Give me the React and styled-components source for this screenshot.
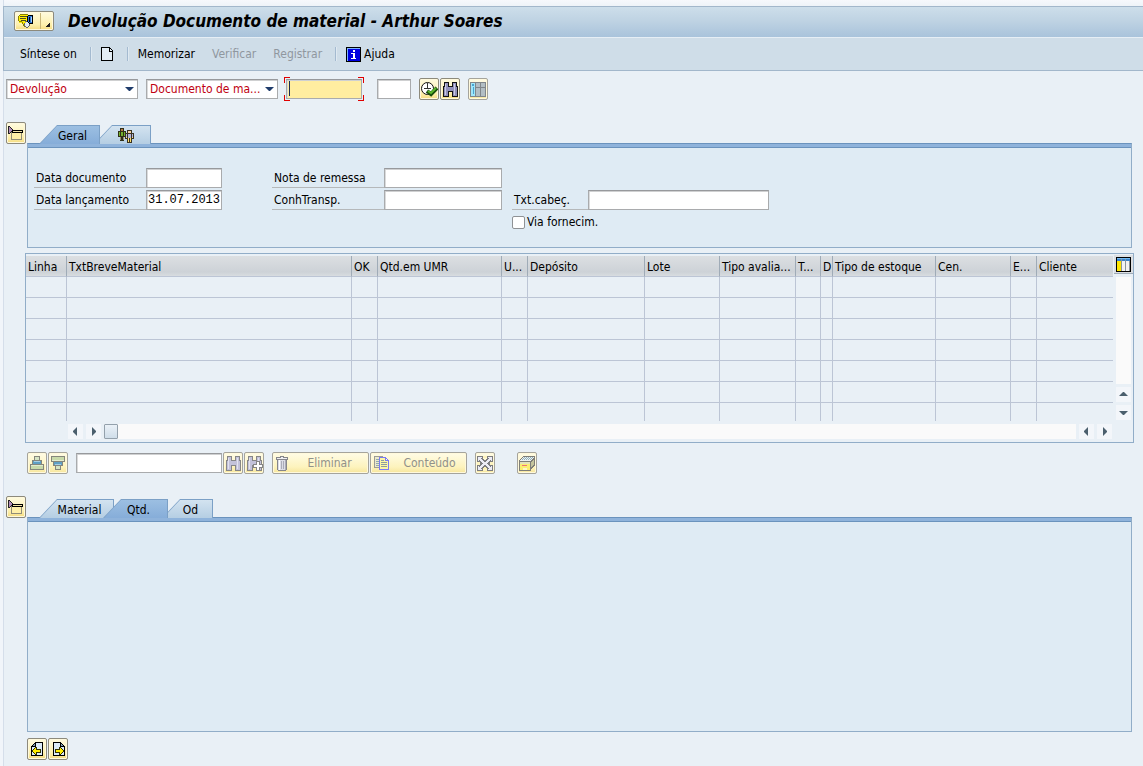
import React, { useState } from "react";
import styled, { createGlobalStyle, css } from "styled-components";

const GlobalStyle = createGlobalStyle`
  * {
    box-sizing: border-box;
  }
  body {
    margin: 0;
    background: #e9f0f6;
    color: #000;
    font-family: "DejaVu Sans Condensed", "DejaVu Sans", sans-serif;
    font-size: 12px;
    line-height: 16px;
  }
  button,
  input,
  select {
    font: inherit;
    color: inherit;
    margin: 0;
  }
`;

const columns = [
  { name: "Linha", width: 41 },
  { name: "TxtBreveMaterial" },
  { name: "OK", width: 26 },
  { name: "Qtd.em UMR", width: 124 },
  { name: "U...", width: 26 },
  { name: "Depósito", width: 117 },
  { name: "Lote", width: 75 },
  { name: "Tipo avalia...", width: 76 },
  { name: "T...", width: 25 },
  { name: "D", width: 12 },
  { name: "Tipo de estoque", width: 103 },
  { name: "Cen.", width: 75 },
  { name: "E...", width: 26 },
  { name: "Cliente", width: 76 }
];

const emptyRows = [1, 2, 3, 4, 5, 6, 7];

/* icons */

const Icon = ({ w = 16, h = 16, children }) => (
  <svg
    width={w}
    height={h}
    viewBox={`0 0 ${w} ${h}`}
    shapeRendering='crispEdges'
    aria-hidden='true'
  >
    {children}
  </svg>
);

const MenuIcon = () => (
  <Icon w={17} h={15}>
    <path d='M1 1h9v8H7v3H6v-1H5v-1H4V9H1z' fill='#ffee00' />
    <path d='M2 0h8v1H2zM1 1h1v1H1zM0 2h1v5H0zM1 7h3v1H1zM4 8h1v2H4zM5 10h1v2H5zM6 12h1v1H6z' fill='#8a8200' />
    <path d='M2 2h7v1H2zM2 4h6v1H2zM3 6h5v1H3z' fill='#4a4a20' />
    <path d='M9 2h1V1h6v9h-5V9h-1V8H9z' fill='#000' />
    <path d='M10 2h5v7h-4V8h-1z' fill='#2f78d8' />
    <path d='M11 3h1v5h-1zM12 4h1v3h-1z' fill='#000' />
    <path d='M14 3h1v5h-1z' fill='#a8d4ff' />
    <path d='M7 9h1V8h2v1h1v3h-1v1H8v-1H7z' fill='#e4ecf2' />
    <path d='M7 7h2v1H7zM6 9h1v3H6zM7 12h1v1H7zM8 13h2v1H8zM10 12h1v1h-1zM11 10h1v2h-1z' fill='#666' />
  </Icon>
);

const NewIcon = () => (
  <Icon w={13} h={14}>
    <path d='M1 1h7l4 4v8H1z' fill='#e3edf5' />
    <path d='M0 0h9v1H1v12h10V4h1v10H0zM8 1h1v3h3v1H8zM9 1h1v1H9zM10 2h1v1h-1zM11 3h1v1h-1z' fill='#000' />
  </Icon>
);

const InfoIcon = () => (
  <Icon w={15} h={15}>
    <path d='M0 0h15v15H0z' fill='#000' />
    <path d='M1 1h13v13H1z' fill='#0000e0' />
    <path d='M1 1h13v1H2v12H1z' fill='#7db4ff' />
    <path d='M7 3h2v2H7zM5 6h4v5h1v1H5v-1h2V7H5z' fill='#fff' />
  </Icon>
);

const ExecuteIcon = () => (
  <Icon w={18} h={16}>
    <circle cx='7.5' cy='7.5' r='6' fill='#fff' stroke='#111' shapeRendering='auto' />
    <path d='M7 2h1v6H7zM4 7h7v1H4z' fill='#333' />
    <path d='M7 10l4 3 6-6' stroke='#174d0c' strokeWidth='4' fill='none' shapeRendering='auto' />
    <path d='M8 10l3 2 5-5' stroke='#5cb82e' strokeWidth='2' fill='none' shapeRendering='auto' />
  </Icon>
);

const FindIcon = ({ more, off }) => (
  <Icon w={17} h={15}>
    <path
      d='M2 0h5v4h3V0h5v4h1v11h-6v-5H7v5H1V4h1z'
      fill={off ? "#868686" : "#111"}
    />
    <path
      d='M3 1h3v4h5V1h3v4h1v9h-4V9H6v5H2V5h1z'
      fill={off ? "#c3c2da" : "#9190bb"}
    />
    <path d='M3 2h1v11H3zM12 2h1v11h-1z' fill={off ? "#e2e2ef" : "#c9c9e4"} />
    {more && (
      <g>
        <path d='M10 5h4v3h3v4h-3v3h-4v-3H7V8h3z' fill='#868686' />
        <path d='M11 6h2v3h3v2h-3v3h-2v-3H8V9h3z' fill='#fff' />
      </g>
    )}
  </Icon>
);

const LayoutIcon = () => (
  <Icon w={16} h={15}>
    <path d='M0 0h16v15H0z' fill='#80868a' />
    <path d='M1 1h4v13H1z' fill='#9fe6fa' />
    <path d='M2 2h2v2H2zM3 5h1v7H3z' fill='#4aa5d0' />
    <path d='M6 1h4v4H6zM11 1h4v4h-4zM6 6h4v8H6zM11 6h4v8h-4z' fill='#b2bec4' />
  </Icon>
);

const TrayIcon = () => (
  <Icon w={16} h={15}>
    <path d='M4 7h9v6H4z' fill='#fff0a8' />
    <path d='M3 6h1v8H3zM3 13h11v1H3zM13 7h1v7h-1z' fill='#918d78' />
    <path d='M4 4h11v3H4z' fill='#000' />
    <path d='M5 5h9v1H5z' fill='#f3e5ab' />
    <path d='M1 1h1v1h1v1h1v2H3v1H2v1H1z' fill='#b48fbd' />
    <path d='M0 0h1v8H0zM1 0h1v1H1zM2 1h1v1H2zM3 2h1v1H3zM4 3h1v1H4zM3 5h1v1H3zM2 6h1v1H2zM1 7h1v1H1z' fill='#222' />
  </Icon>
);

const PartnerIcon = () => (
  <Icon w={17} h={15}>
    <path d='M3 0h4v3h2v6H7v4H3V9H1V3h2z' fill='#303018' />
    <path d='M4 1h2v2H4z' fill='#b67645' />
    <path d='M2 4h1v4H2zM4 4h2v4H4zM7 4h1v4H7z' fill='#74b02e' />
    <path d='M3 9h1v3H3zM6 9h1v3H6z' fill='#9a8a70' />
    <path d='M10 2h5v3h2v6h-2v4h-5v-4H8V5h2z' fill='#3a3322' />
    <path d='M11 3h3v2h-3z' fill='#f6d2a4' />
    <path d='M9 6h1v3H9zM11 6h3v4h-3zM15 6h1v3h-1z' fill='#b3b5dc' />
    <path d='M9 9h1v1H9zM15 9h1v1h-1z' fill='#ffe08a' />
    <path d='M11 10h1v4h-1zM13 10h1v4h-1z' fill='#ffdf6a' />
  </Icon>
);

const ConfigIcon = () => (
  <Icon w={15} h={15}>
    <path d='M0 0h15v15H0z' fill='#000' />
    <path d='M1 1h13v3H1z' fill='#3584d0' />
    <path d='M1 1h13v1H1z' fill='#73b9ef' />
    <path d='M1 4h4v10H1z' fill='#ffe600' />
    <path d='M6 4h3v10H6zM10 4h4v10h-4z' fill='#f2f2f2' />
    <path d='M5 2h1v12H5zM9 2h1v12H9zM13 4h1v10h-1z' fill='#8a949b' />
  </Icon>
);

const SortIcon = ({ down }) => (
  <Icon w={14} h={14}>
    <g transform={down ? "translate(0 14) scale(1 -1)" : undefined}>
      <path d='M4 0h6v4h2v4h2v6H0V8h2V4h2z' fill='#85867c' />
      <path d='M5 1h4v3H5z' fill='#d6e4c4' />
      <path d='M3 5h8v3H3z' fill='#5f9fc4' />
      <path d='M4 5h6v1H4z' fill='#a5cfe6' />
      <path d='M1 9h12v4H1z' fill='#c8daaa' />
      <path d='M1 9h12v1H1z' fill='#e2edd0' />
    </g>
  </Icon>
);

const TrashIcon = () => (
  <Icon w={12} h={15}>
    <path d='M4 0h4v1h4v3h-1v10h-1v1H2v-1H1V4H0V1h4z' fill='#85858a' />
    <path d='M5 1h2v1H5zM1 2h10v1H1z' fill='#f0f0f3' />
    <path d='M2 4h8v10H2z' fill='#dcdde6' />
    <path d='M3 4h1v10H3z' fill='#fff' />
    <path d='M5 5h1v8H5zM7 5h1v8H7zM9 4h1v10H9z' fill='#aaabb8' />
  </Icon>
);

const CopyIcon = () => (
  <Icon w={16} h={15}>
    <path d='M0 0h9v12H0z' fill='#9b9b96' />
    <path d='M1 1h7v10H1z' fill='#eceacb' />
    <path d='M2 3h3v1H2zM2 5h3v1H2zM2 7h3v1H2zM2 9h3v1H2z' fill='#90a8b0' />
    <path d='M5 1h7v1h1v1h1v1h1v10H5z' fill='#7b7bf2' />
    <path d='M6 2h5v3h3v8H6z' fill='#fdf6a4' />
    <path d='M12 3h1v1h-1z' fill='#fff' />
    <path d='M7 4h3v1H7zM7 6h6v1H7zM7 8h6v1H7zM7 10h6v1H7z' fill='#8d9ca0' />
  </Icon>
);

const ExpandIcon = () => (
  <Icon w={16} h={15}>
    <g fill='#7d7d80'>
      <path d='M0 0h6v3h1v1h2V3h1V0h6v6h-3v3h3v6h-6v-3H9v-1H7v1H6v3H0V9h3V6H0z' />
    </g>
    <path
      d='M1 1h4v1H4v1h1v1h1v1h1v1h2V5h1V4h1V3h1V2h-1V1h4v4h-1V4h-1v1h-1v1h-1v1h-1v1h1v1h1v1h1v1h1v-1h1v4h-4v-1h1v-1h-1v-1h-1v-1H9V9H7v1H6v1H5v1H4v1h1v1H1v-4h1v1h1v-1h1V9h1V8h1V7H5V6H4V5H3V4H2v1H1z'
      fill='#ececf6'
    />
    <path d='M6 0h4v2H6zM6 13h4v2H6zM0 6h2v3H0zM14 6h2v3h-2z' fill='#fdf3bd' />
  </Icon>
);

const BoxIcon = () => (
  <Icon w={16} h={15}>
    <path d='M4 0h12v10h-1v1h-1v1h-1v1h-1v2H0V4h1V3h1V2h1V1h1z' fill='#7e7e78' />
    <path d='M4 1h11v1h-1v1h-1v1h-1v1H1V4h1V3h1V2h1z' fill='#eef2ee' />
    <path d='M5 1h1v1H5zM7 1h1v1H7zM9 1h1v1H9zM11 1h1v1h-1zM13 1h1v1h-1zM4 2h1v1H4zM6 2h1v1H6zM8 2h1v1H8zM10 2h1v1h-1zM12 2h1v1h-1zM3 3h1v1H3zM5 3h1v1H5zM7 3h1v1H7zM9 3h1v1H9zM11 3h1v1h-1z' fill='#8fb0c0' />
    <path d='M1 6h10v8H8v-2H4v2H1z' fill='#fbee70' />
    <path d='M4 12h4v2H4z' fill='#fff6c4' />
    <path d='M1 6h10v2H1z' fill='#e3e2bb' />
    <path d='M12 6h1V5h1V4h1v5h-1v1h-1v1h-1z' fill='#c4c49c' />
    <path d='M3 9h5v1H3z' fill='#f07575' />
  </Icon>
);

const PageIcon = ({ next }) => (
  <Icon w={13} h={14}>
    <g transform={next ? undefined : "translate(13 0) scale(-1 1)"}>
      <path d='M1 0h8v1h1v1h1v1h1v1h1v10H1z' fill='#000' />
      <path d='M2 1h6v4h4v8H2z' fill='#dcebf8' />
      <path d='M9 2h1v1h1v1H9z' fill='#7c9cae' />
      <path d='M3 7h4V5h2v1h1v1h1v1h1v2h-1v1h-1v1H9v1H7v-2H3z' fill='#333300' />
      <path d='M4 8h4V6h1v1h1v1h1v2h-1v1H9v1H8v-2H4z' fill='#ffee00' />
    </g>
  </Icon>
);

/* Small triangles of the drop-downs and the scroll bars */
const Arrow = ({ dir = "down", color = "#4b5f6d" }) => {
  const shapes = {
    down: "M0 3h9L5 7H4z",
    up: "M0 6h9L5 2H4z",
    left: "M6 0v9L2 5V4z",
    right: "M3 0v9l4-4V4z"
  };
  return (
    <svg width='9' height='9' viewBox='0 0 9 9' aria-hidden='true'>
      <path d={shapes[dir]} fill={color} />
    </svg>
  );
};

const Tabs = ({ tabs, active, onChange }) => (
  <TabList role='tablist'>
    {tabs.map((tab, i) => (
      <Tab
        key={tab.name}
        type='button'
        role='tab'
        aria-label={tab.name}
        aria-selected={active === i}
        $active={active === i}
        $width={tab.width}
        onClick={() => onChange(i)}
      >
        {tab.icon || tab.name}
      </Tab>
    ))}
  </TabList>
);

const App = () => {
  const [headerTab, setHeaderTab] = useState(0);
  const [itemTab, setItemTab] = useState(1);

  return (
    <Window>
      <GlobalStyle />
      <Header>
        <TitleBar>
          <MenuButton type='button' aria-label='Menu'>
            <MenuIcon />
            <span className='corner' />
          </MenuButton>
          <h1>Devolução Documento de material - Arthur Soares</h1>
        </TitleBar>
        <Toolbar>
          <ToolButton type='button'>Síntese on</ToolButton>
          <Divider />
          <ToolButton type='button' aria-label='Novo'>
            <NewIcon />
          </ToolButton>
          <Divider />
          <ToolButton type='button'>Memorizar</ToolButton>
          <ToolButton type='button' disabled>
            Verificar
          </ToolButton>
          <ToolButton type='button' disabled>
            Registrar
          </ToolButton>
          <Divider />
          <ToolButton type='button'>
            <InfoIcon />
            Ajuda
          </ToolButton>
        </Toolbar>
      </Header>

      <ActionRow>
        <SelectBox>
          <select aria-label='Operação' defaultValue='Devolução'>
            <option>Devolução</option>
          </select>
          <Arrow color='#1f3c6b' />
        </SelectBox>
        <SelectBox>
          <select aria-label='Referência' defaultValue='Documento de ma...'>
            <option>Documento de ma...</option>
          </select>
          <Arrow color='#1f3c6b' />
        </SelectBox>
        <FocusFrame>
          <Field $width={76} $focus aria-label='Número do documento' />
        </FocusFrame>
        <Field $width={34} aria-label='Exercício' />
        <ButtonGroup>
          <IconButton type='button' aria-label='Executar'>
            <ExecuteIcon />
          </IconButton>
          <IconButton type='button' aria-label='Procurar'>
            <FindIcon />
          </IconButton>
        </ButtonGroup>
        <IconButton type='button' disabled aria-label='Layout'>
          <LayoutIcon />
        </IconButton>
      </ActionRow>

      <Tray>
        <IconButton type='button' aria-label='Fechar cabeçalho'>
          <TrayIcon />
        </IconButton>
        <div>
          <Tabs
            active={headerTab}
            onChange={setHeaderTab}
            tabs={[
              { name: "Geral", width: 61 },
              { name: "Parceiro", width: 57, icon: <PartnerIcon /> }
            ]}
          />
          <Panel $height={105}>
            <Form>
              <FormColumn>
                <FormRow $label={112}>
                  <label htmlFor='data-doc'>Data documento</label>
                  <Field id='data-doc' $width={76} />
                </FormRow>
                <FormRow $label={112}>
                  <label htmlFor='data-lanc'>Data lançamento</label>
                  <Field id='data-lanc' $width={76} defaultValue='31.07.2013' />
                </FormRow>
              </FormColumn>
              <FormColumn>
                <FormRow $label={112}>
                  <label htmlFor='nota'>Nota de remessa</label>
                  <Field id='nota' $width={118} />
                </FormRow>
                <FormRow $label={112}>
                  <label htmlFor='conh'>ConhTransp.</label>
                  <Field id='conh' $width={118} />
                </FormRow>
              </FormColumn>
              <FormColumn $end>
                <FormRow $label={76}>
                  <label htmlFor='cabec'>Txt.cabeç.</label>
                  <Field id='cabec' $width={181} />
                </FormRow>
                <CheckLabel>
                  <input type='checkbox' />
                  Via fornecim.
                </CheckLabel>
              </FormColumn>
            </Form>
          </Panel>
        </div>
      </Tray>

      <Grid>
        <div className='main'>
          <Table>
            <colgroup>
              {columns.map(col => (
                <col key={col.name} width={col.width} />
              ))}
            </colgroup>
            <thead>
              <tr>
                {columns.map(col => (
                  <th key={col.name}>{col.name}</th>
                ))}
              </tr>
            </thead>
            <tbody>
              {emptyRows.map(row => (
                <tr key={row}>
                  {columns.map(col => (
                    <td key={col.name} />
                  ))}
                </tr>
              ))}
            </tbody>
          </Table>
          <HScroll>
            <ScrollButton type='button' aria-label='Primeira coluna'>
              <Arrow dir='left' />
            </ScrollButton>
            <ScrollButton type='button' aria-label='Próxima coluna'>
              <Arrow dir='right' />
            </ScrollButton>
            <div className='track'>
              <div className='thumb' />
            </div>
            <ScrollButton type='button' aria-label='Rolar à esquerda'>
              <Arrow dir='left' />
            </ScrollButton>
            <ScrollButton type='button' aria-label='Rolar à direita'>
              <Arrow dir='right' />
            </ScrollButton>
          </HScroll>
        </div>
        <VScroll>
          <ConfigButton type='button' aria-label='Configuração'>
            <ConfigIcon />
          </ConfigButton>
          <div className='track' />
          <ScrollButton type='button' aria-label='Rolar para cima'>
            <Arrow dir='up' />
          </ScrollButton>
          <ScrollButton type='button' aria-label='Rolar para baixo'>
            <Arrow dir='down' />
          </ScrollButton>
        </VScroll>
      </Grid>

      <GridActions>
        <ButtonGroup>
          <IconButton type='button' disabled aria-label='Ordem crescente'>
            <SortIcon />
          </IconButton>
          <IconButton type='button' disabled aria-label='Ordem decrescente'>
            <SortIcon down />
          </IconButton>
        </ButtonGroup>
        <ButtonGroup>
          <Field $width={146} aria-label='Procurar na lista' />
          <IconButton type='button' disabled aria-label='Procurar'>
            <FindIcon off />
          </IconButton>
          <IconButton type='button' disabled aria-label='Continuar procura'>
            <FindIcon off more />
          </IconButton>
        </ButtonGroup>
        <ButtonGroup>
          <TextButton type='button' disabled>
            <TrashIcon />
            <span>Eliminar</span>
          </TextButton>
          <TextButton type='button' disabled>
            <CopyIcon />
            <span>Conteúdo</span>
          </TextButton>
        </ButtonGroup>
        <IconButton type='button' disabled aria-label='Distribuir'>
          <ExpandIcon />
        </IconButton>
        <IconButton type='button' disabled $apart aria-label='Estoque'>
          <BoxIcon />
        </IconButton>
      </GridActions>

      <Tray>
        <IconButton type='button' aria-label='Fechar detalhe'>
          <TrayIcon />
        </IconButton>
        <div>
          <Tabs
            active={itemTab}
            onChange={setItemTab}
            tabs={[
              { name: "Material", width: 75 },
              { name: "Qtd.", width: 65 },
              { name: "Od", width: 51 }
            ]}
          />
          <Panel $height={215} />
        </div>
      </Tray>

      <Footer>
        <IconButton type='button' aria-label='Item anterior'>
          <PageIcon />
        </IconButton>
        <IconButton type='button' aria-label='Próximo item'>
          <PageIcon next />
        </IconButton>
      </Footer>
    </Window>
  );
};

const Window = styled.div`
  min-width: 1000px;
  min-height: 100vh;
  padding-top: 6px;
  border-left: 3px solid #f1f5fa;
  box-shadow: inset 1px 0 #d5deea;
  background: linear-gradient(#f6f8fc, #eef3f8 6px, #e9f0f6 7px);
`;

const Header = styled.header`
  border: 1px solid #a2b7cb;
  border-right: 0;
`;

const TitleBar = styled.div`
  display: flex;
  align-items: center;
  height: 30px;
  padding: 0 10px 2px;
  background: linear-gradient(#cddeea, #bfd3e3 45%, #a9c3db);
  h1 {
    margin: 0 0 0 14px;
    font-size: 17px;
    line-height: 20px;
    font-weight: bold;
    font-style: italic;
    white-space: nowrap;
  }
`;

const raised = css`
  border: 1px solid #8d8a7c;
  border-radius: 2px;
  background: linear-gradient(#fffbe0, #fdf0ae 70%, #f5dc80);
  box-shadow: inset 0 0 0 1px #fff9dc;
  &:disabled {
    border-color: #a5a49c;
    background: linear-gradient(#fffce6, #fdf3bd 70%, #f7e69c);
  }
`;

const MenuButton = styled.button`
  ${raised}
  display: flex;
  align-items: center;
  width: 40px;
  height: 20px;
  padding: 0 3px;
  .corner {
    height: 16px;
    margin-left: 6px;
    width: 10px;
    border-left: 1px solid #c9b77a;
    background: linear-gradient(135deg, transparent 50%, #222 50%) 5px 10px / 4px
      4px no-repeat;
  }
`;

const Toolbar = styled.nav`
  display: flex;
  align-items: center;
  height: 33px;
  padding: 0 8px;
  border-top: 1px solid #e6eef5;
  background: #cfdde8;
`;

const ToolButton = styled.button`
  display: flex;
  align-items: center;
  gap: 3px;
  padding: 0 8px;
  margin-right: 1px;
  border: 0;
  background: none;
  white-space: nowrap;
  &:disabled {
    color: #8f979f;
  }
`;

const Divider = styled.span`
  width: 2px;
  height: 14px;
  margin: 0 1px 0 4px;
  border-left: 1px solid #a4bad0;
  border-right: 1px solid #dfe9f1;
`;

const ActionRow = styled.div`
  display: flex;
  align-items: center;
  gap: 8px;
  height: 24px;
  margin: 6px 0 0 3px;
`;

const sunken = css`
  height: 20px;
  border: 1px solid #a9abad;
  border-top-color: #97999c;
  border-radius: 0;
  box-shadow: inset 0 1px #cfd0d1, inset 1px 0 #dadbdc;
  outline: 0;
`;

const SelectBox = styled.div`
  position: relative;
  width: 132px;
  display: flex;
  select {
    ${sunken}
    appearance: none;
    width: 100%;
    padding: 0 16px 0 3px;
    background: #fff;
    color: #c00010;
  }
  svg {
    position: absolute;
    right: 4px;
    top: 5px;
    pointer-events: none;
  }
`;

const Field = styled.input`
  ${sunken}
  width: ${({ $width }) => $width}px;
  padding: 0 1px;
  background: #fff;
  font-family: "Liberation Mono", monospace;
  ${({ $focus }) =>
    $focus &&
    css`
      background: linear-gradient(#1a2a55, #1a2a55) 2px 1px / 1px 15px no-repeat
        #ffeda0;
    `}
`;

/* red corners round the field that has the cursor */
const FocusFrame = styled.div`
  --red: linear-gradient(#e00000, #e00000);
  display: flex;
  padding: 2px;
  margin: 0 5px 0 -2px;
  background: var(--red) 0 0 / 6px 1px, var(--red) 0 0 / 1px 6px,
    var(--red) 100% 0 / 6px 1px, var(--red) 100% 0 / 1px 6px,
    var(--red) 0 100% / 6px 1px, var(--red) 0 100% / 1px 6px,
    var(--red) 100% 100% / 6px 1px, var(--red) 100% 100% / 1px 6px;
  background-repeat: no-repeat;
`;

const ButtonGroup = styled.div`
  display: flex;
  align-items: center;
  gap: 1px;
`;

const IconButton = styled.button`
  ${raised}
  display: flex;
  flex: none;
  align-items: center;
  justify-content: center;
  width: 20px;
  height: 22px;
  padding: 0;
  margin-left: ${({ $apart }) => ($apart ? 14 : 0)}px;
`;

const TextButton = styled.button`
  ${raised}
  display: flex;
  align-items: center;
  width: 97px;
  height: 22px;
  padding: 0 3px;
  color: #91918a;
  span {
    flex: 1;
    padding-left: 6px;
    text-align: center;
  }
`;

const Tray = styled.section`
  display: grid;
  grid-template-columns: 20px 1fr;
  gap: 1px;
  align-items: start;
  margin: 21px 11px 0 3px;
`;

const TabList = styled.div`
  display: flex;
  height: 21px;
  padding: 3px 0 0 12px;
`;

const Tab = styled.button`
  position: relative;
  z-index: ${({ $active }) => ($active ? 2 : 1)};
  display: flex;
  align-items: center;
  justify-content: center;
  width: ${({ $width }) => $width}px;
  height: 19px;
  padding: 2px 0 0 6px;
  border: 0;
  background: #7ba0c6;
  clip-path: polygon(18px 0, 100% 0, 100% 100%, 0 100%);
  &:not(:first-child) {
    margin-left: ${({ $active }) => ($active ? -11 : -6)}px;
  }
  &::before {
    content: "";
    position: absolute;
    inset: 1px 1px 0 1px;
    z-index: -1;
    clip-path: polygon(17px 0, 100% 0, 100% 100%, 0 100%);
    background: ${({ $active }) =>
      $active
        ? "linear-gradient(#9cbfe2, #86add9)"
        : "linear-gradient(#d3e3f0, #b5cee3)"};
  }
`;

const Panel = styled.div`
  min-height: ${({ $height }) => $height}px;
  border: 1px solid #91adc8;
  border-top: 1px solid #6b93bd;
  background: #dfebf4;
  &::before {
    content: "";
    display: block;
    height: 3px;
    background: #8fb3db;
    border-bottom: 1px solid #6b93bd;
  }
`;

const Form = styled.div`
  display: flex;
  padding: 20px 6px 0;
`;

const FormColumn = styled.div`
  display: flex;
  flex-direction: column;
  justify-content: ${({ $end }) => ($end ? "flex-end" : "flex-start")};
  gap: 2px;
  margin-right: 50px;
  & + & {
    margin-right: 10px;
  }
  ${({ $end }) =>
    $end &&
    css`
      padding-top: 22px;
    `}
`;

const FormRow = styled.div`
  display: flex;
  label {
    width: ${({ $label }) => $label}px;
    height: 20px;
    padding: 2px 2px 0;
    border-bottom: 1px solid #b5b8ba;
    white-space: nowrap;
  }
`;

const CheckLabel = styled.label`
  display: flex;
  align-items: center;
  gap: 2px;
  height: 20px;
  input {
    appearance: none;
    width: 13px;
    height: 13px;
    border: 1px solid #8f9295;
    border-radius: 2px;
    background: #fff;
  }
`;

const Grid = styled.div`
  display: flex;
  height: 190px;
  margin: 5px 9px 0 22px;
  border: 1px solid #91adc8;
  .main {
    flex: 1;
    min-width: 0;
    padding-top: 2px;
  }
`;

const Table = styled.table`
  width: 100%;
  table-layout: fixed;
  border-collapse: separate;
  border-spacing: 0;
  th {
    height: 21px;
    padding: 1px 0 0 2px;
    border-right: 1px solid #9fabb7;
    border-bottom: 1px solid #bcc5d5;
    background: linear-gradient(#dcdfe2, #cdd2d7 80%, #d8dce0);
    font-weight: normal;
    text-align: left;
    white-space: nowrap;
  }
  td {
    height: 21px;
    padding: 0;
    border-right: 1px solid #bcc5d5;
    border-bottom: 1px solid #bcc5d5;
  }
  tr > :last-child {
    border-right: 0;
  }
  tbody tr:last-child td {
    height: 18px;
    border-bottom: 0;
  }
`;

const ScrollButton = styled.button`
  display: flex;
  flex: none;
  align-items: center;
  justify-content: center;
  width: 15px;
  height: 15px;
  padding: 0;
  border: 0;
  background: #f3f6fa;
`;

const HScroll = styled.div`
  display: flex;
  gap: 3px;
  padding: 3px 1px 0 42px;
  .track {
    flex: 1;
    height: 15px;
    background: #fafafa;
  }
  .thumb {
    width: 14px;
    height: 15px;
    border: 1px solid #93a0ab;
    border-radius: 1px;
    background: linear-gradient(#eaf1f7, #cfdde9);
  }
`;

const VScroll = styled.div`
  display: flex;
  flex-direction: column;
  align-items: center;
  gap: 3px;
  width: 20px;
  padding-top: 1px;
  .track {
    width: 15px;
    height: 107px;
    background: #fafafa;
  }
`;

const ConfigButton = styled.button`
  display: flex;
  align-items: center;
  justify-content: center;
  width: 19px;
  height: 19px;
  padding: 0;
  border: 0;
  border-bottom: 1px solid #9fabb7;
  background: #dcdfe2;
`;

const GridActions = styled.div`
  display: flex;
  align-items: center;
  gap: 8px;
  margin: 9px 0 22px 24px;
`;

const Footer = styled.footer`
  display: flex;
  gap: 1px;
  padding: 6px 0 6px 24px;
`;

export default App;
